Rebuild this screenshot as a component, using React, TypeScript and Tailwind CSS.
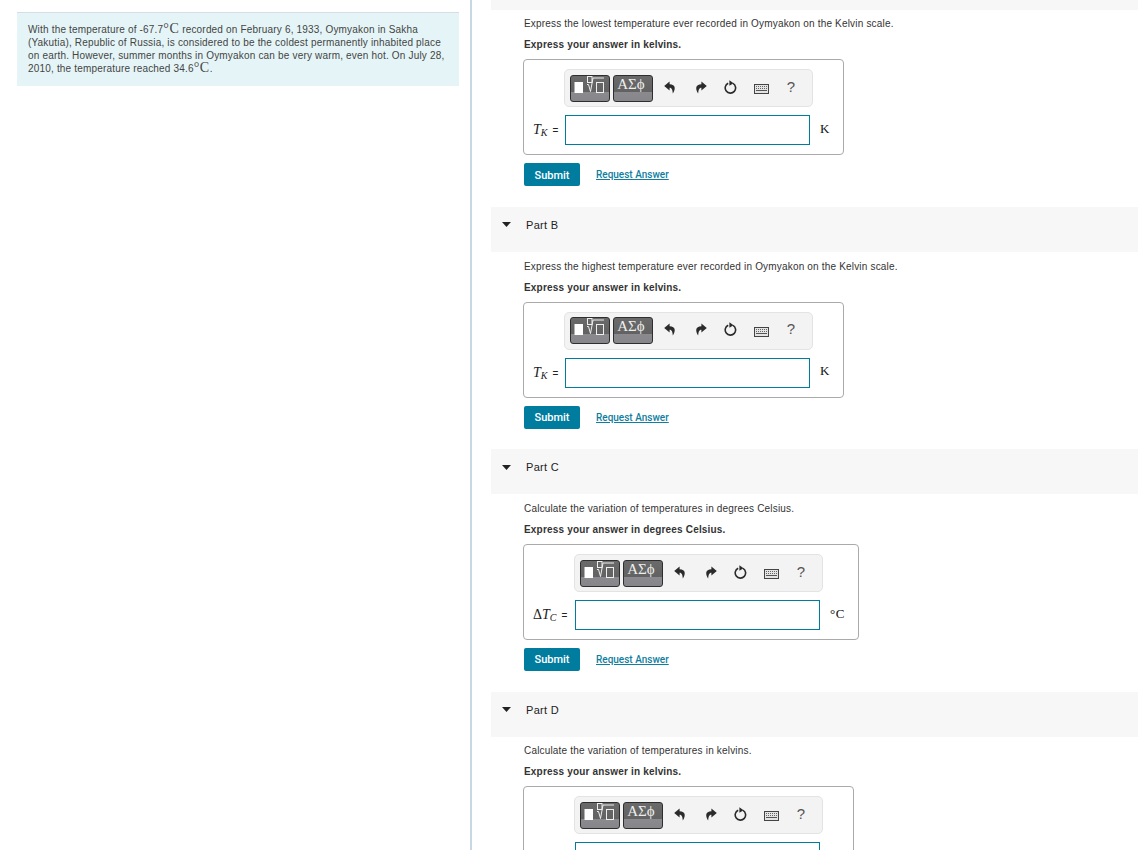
import React from 'react';

const sans = "font-['Liberation_Sans',Arial,sans-serif]";
const serif = "font-['Liberation_Serif','Times_New_Roman',serif]";
const roboto = "font-['Roboto',Arial,sans-serif]";

function TemplateIcon() {
  return (
    <svg width="38" height="25" viewBox="0 0 38 25" fill="none">
      <rect x="3.5" y="6" width="8.5" height="11" fill="#fff" />
      <rect x="16.5" y="0.5" width="4.5" height="6" stroke="#eee" strokeWidth="1" />
      <path d="M16 8.5 L17.5 8.5 L19.5 15.5 L22 2 L33 2" stroke="#eee" strokeWidth="1" />
      <rect x="25.5" y="6.5" width="7" height="10" stroke="#eee" strokeWidth="1" />
    </svg>
  );
}

function UndoIcon({ flip }: { flip?: boolean }) {
  return (
    <svg width="12" height="13" viewBox="0 0 12 13" className={flip ? '-scale-x-100' : ''}>
      <path d="M5.6 0.4 L0.2 5 L5.6 9.4 L5.6 6.8 C7.4 6.8 8.6 8.4 8.8 12.6 C11.8 8 11.8 3.4 5.6 3.2 Z" fill="#2b2b2b" />
    </svg>
  );
}

function ResetIcon() {
  return (
    <svg width="14" height="15" viewBox="0 0 14 15" fill="none">
      <path d="M9 3.4 A5.2 5.2 0 1 1 4.2 3.2" stroke="#2b2b2b" strokeWidth="1.6" />
      <path d="M5.4 0.2 L9.6 3.2 L5.4 5.8 Z" fill="#2b2b2b" />
    </svg>
  );
}

function KeyboardIcon() {
  return (
    <svg width="15" height="10" viewBox="0 0 15 10" fill="none">
      <rect x="0.5" y="0.5" width="14" height="9" fill="#e4e4e4" stroke="#444" />
      <path d="M2 2.5 H13 M2 4.5 H13" stroke="#666" strokeDasharray="1 1" />
      <path d="M2 6.5 H13" stroke="#555" />
    </svg>
  );
}

function ToolButton({ children }: { children: React.ReactNode }) {
  return (
    <div className="relative w-[40px] h-[27px] rounded-[3px] border border-[#2e2e2e] bg-[linear-gradient(#6a6a6a_0%,#626262_63%,#8b8b8f_63%,#85858a_100%)] overflow-hidden">
      {children}
    </div>
  );
}

function Toolbar() {
  return (
    <div className="flex items-center h-[38px] w-[249px] -ml-px pl-[5px] rounded-[5px] border border-[#e3e3e3] bg-[#f3f3f3]">
      <div className="flex gap-[3px]">
        <ToolButton>
          <TemplateIcon />
        </ToolButton>
        <ToolButton>
          <div className={`${serif} text-[15px] leading-[16px] text-center pr-[4px] text-[#eeeeee]`}>ΑΣϕ</div>
        </ToolButton>
      </div>
      <div className="flex items-center ml-[1px] -mt-[2px]">
        <div className="w-[32px] flex justify-center"><UndoIcon /></div>
        <div className="w-[30px] flex justify-center"><UndoIcon flip /></div>
        <div className="w-[30px] flex justify-center"><ResetIcon /></div>
        <div className="w-[30px] flex justify-center pt-[4px]"><KeyboardIcon /></div>
        <div className={`w-[30px] text-center text-[15px] text-[#555] ${sans}`}>?</div>
      </div>
    </div>
  );
}

function AnswerBox({ label, labelWidth, unit }: { label: React.ReactNode; labelWidth: string; unit: string }) {
  return (
    <div className="w-fit rounded-[4px] border border-[#aaaaaa] pl-[9px] pr-[13px] pt-[9px] pb-[9px]">
      <div className="flex">
        <div className={labelWidth} />
        <Toolbar />
      </div>
      <div className="flex items-center mt-[8px]">
        <div className={`${labelWidth} ${serif} text-[14px] text-[#222] whitespace-nowrap pb-[1px]`}>{label}</div>
        <div className="w-[245px] h-[30px] border border-[#007c9f] bg-white" />
        <div className={`${serif} pl-[10px] pb-[3px] text-[13px] tracking-[0.5px] text-[#111] whitespace-nowrap`}>{unit}</div>
      </div>
    </div>
  );
}

function Tk() {
  return (
    <>
      <i>T</i>
      <i className="text-[10px] relative top-[2px]">K</i>
      <span className={`${sans} text-[10px] ml-[5px]`}>=</span>
    </>
  );
}

function DeltaTc() {
  return (
    <>
      Δ<i>T</i>
      <i className="text-[10px] relative top-[2px]">C</i>
      <span className={`${sans} text-[10px] ml-[5px]`}>=</span>
    </>
  );
}

function PartHeader({ title }: { title: string }) {
  return (
    <div className="flex items-center h-[45px] bg-[#f7f7f7]">
      <div className="w-[31px] mr-[4px] flex justify-center pb-[9px]">
        <svg width="9" height="5" viewBox="0 0 9 5"><path d="M0 0 H9 L4.5 5 Z" fill="#222" /></svg>
      </div>
      <span className={`${sans} text-[11px] tracking-[0.3px] text-[#222] pb-[8px]`}>{title}</span>
    </div>
  );
}

function PartBody({ question, hint, label, labelWidth, unit }: { question: string; hint: string; label: React.ReactNode; labelWidth: string; unit: string }) {
  return (
    <div className={`pl-[32px] pt-[7.8px] pb-[20.5px] ${sans}`}>
      <p className="pl-px text-[10px] tracking-[0.18px] leading-[13px] text-[#333]">{question}</p>
      <p className="pl-px mt-[8px] text-[10px] tracking-[0.18px] leading-[13px] font-bold text-[#333]">{hint}</p>
      <div className="mt-[8px]">
        <AnswerBox label={label} labelWidth={labelWidth} unit={unit} />
      </div>
      <div className={`flex items-start mt-[8px] ml-px ${roboto}`}>
        <button className="w-[56px] h-[23px] pt-[2px] rounded-[2px] bg-[#007c9f] text-white text-[11px] font-medium">Submit</button>
        <a href="#" className="ml-[16px] text-[10px] font-medium underline text-[#0f7ea0] leading-[23px]">Request Answer</a>
      </div>
    </div>
  );
}

export default function App() {
  return (
    <div className={`flex w-[1138px] h-[850px] overflow-hidden bg-white ${sans}`}>
      <div className="w-[472px] shrink-0 h-full border-r-2 border-[#c9d6e4] pt-[12px] pl-[17px]">
        <div className="w-[442px] h-[74px] border-t border-[#d5dfe2] bg-[#e5f5f7] pl-[11px] pr-[12px] pt-[10px] text-[10px] tracking-[0.18px] leading-[13px] text-[#444]">
          With the temperature of -67.7<span className={`${serif} text-[14px] leading-[10px] tracking-[0.5px]`}>°C</span> recorded on February 6, 1933, Oymyakon in Sakha (Yakutia), Republic of Russia, is considered to be the coldest permanently inhabited place on earth. However, summer months in Oymyakon can be very warm, even hot. On July 28, 2010, the temperature reached 34.6<span className={`${serif} text-[14px] leading-[10px] tracking-[0.5px]`}>°C</span>.
        </div>
      </div>
      <div className="flex-1 pl-[19px]">
        <div className="h-[9.65px] bg-[#f7f7f7]" />
        <PartBody
          question="Express the lowest temperature ever recorded in Oymyakon on the Kelvin scale."
          hint="Express your answer in kelvins."
          label={<Tk />}
          labelWidth="w-[32px]"
          unit="K"
        />
        <PartHeader title="Part B" />
        <PartBody
          question="Express the highest temperature ever recorded in Oymyakon on the Kelvin scale."
          hint="Express your answer in kelvins."
          label={<Tk />}
          labelWidth="w-[32px]"
          unit="K"
        />
        <PartHeader title="Part C" />
        <PartBody
          question="Calculate the variation of temperatures in degrees Celsius."
          hint="Express your answer in degrees Celsius."
          label={<DeltaTc />}
          labelWidth="w-[42px]"
          unit="°C"
        />
        <PartHeader title="Part D" />
        <PartBody
          question="Calculate the variation of temperatures in kelvins."
          hint="Express your answer in kelvins."
          label={<Tk />}
          labelWidth="w-[42px]"
          unit="K"
        />
      </div>
    </div>
  );
}
